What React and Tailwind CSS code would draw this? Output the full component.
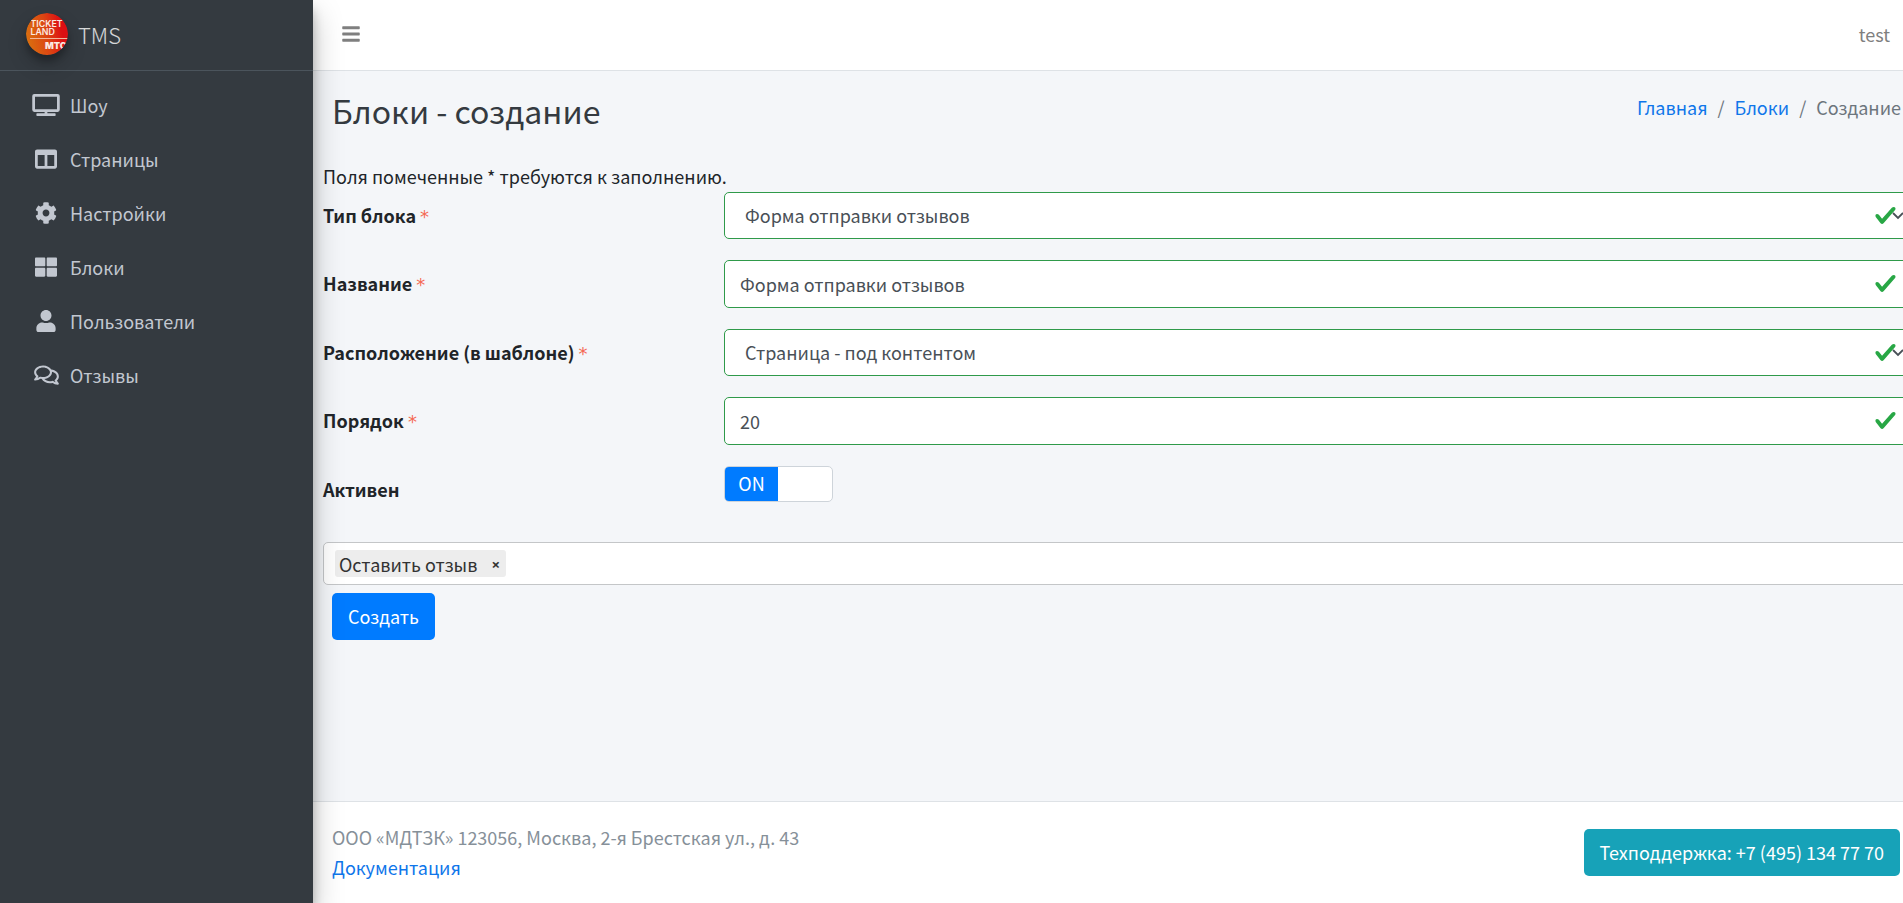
import { useState } from "react";
import { FaBars, FaCog, FaColumns, FaRegComments, FaThLarge, FaTv, FaUser } from "react-icons/fa";

const navItems = [
  { label: "Шоу", Icon: FaTv, width: "w-7" },
  { label: "Страницы", Icon: FaColumns, width: "w-[22px]" },
  { label: "Настройки", Icon: FaCog, width: "w-[22px]" },
  { label: "Блоки", Icon: FaThLarge, width: "w-[22px]" },
  { label: "Пользователи", Icon: FaUser, width: "w-5" },
  { label: "Отзывы", Icon: FaRegComments, width: "w-[25px]" },
];

function Logo() {
  return (
    <svg
      viewBox="0 0 42 42"
      className="size-[42px] rounded-full shadow-[0_10px_20px_rgba(0,0,0,0.19),0_6px_6px_rgba(0,0,0,0.23)]"
      aria-hidden="true"
    >
      <defs>
        <linearGradient id="logo-fill" x1="0" y1="0.6" x2="1" y2="0.4">
          <stop offset="0" stopColor="#d9700f" />
          <stop offset="0.5" stopColor="#dc4412" />
          <stop offset="0.85" stopColor="#dd0f12" />
        </linearGradient>
        <clipPath id="logo-clip">
          <circle cx="21" cy="21" r="21" />
        </clipPath>
      </defs>
      <g clipPath="url(#logo-clip)">
        <rect width="42" height="42" fill="url(#logo-fill)" />
        <g fill="#fbe9e0" fontFamily="Inter, sans-serif" fontWeight="600">
          <text x="4.5" y="13.5" fontSize="8.8">TICKET</text>
          <text x="4.5" y="21.5" fontSize="8.8">LAND</text>
          <text x="19" y="35.5" fontSize="9.2" fontWeight="900">МТС</text>
        </g>
        <rect x="4" y="25" width="38" height="1" fill="#f3b79b" />
      </g>
    </svg>
  );
}

function Sidebar() {
  return (
    <aside className="relative z-10 w-[313px] shrink-0 bg-[#343a40] shadow-[0_14px_28px_rgba(0,0,0,0.25),0_10px_10px_rgba(0,0,0,0.22)]">
      <a href="#" className="flex h-[71px] items-center gap-[10px] border-b border-[#4b545c] pb-[3px] pl-[26px] text-[22px] font-light leading-8 text-white/80">
        <Logo />
        <span>TMS</span>
      </a>
      <nav className="px-[10px] pt-[9px]">
        <ul className="flex flex-col gap-1">
          {navItems.map(({ label, Icon, width }) => (
            <li key={label}>
              <a href="#" className="flex h-[50px] items-center gap-2 px-5 text-[#c2c7d0]">
                <span className="flex w-8 justify-center">
                  <Icon className={`h-[22px] shrink-0 ${width}`} />
                </span>
                <span>{label}</span>
              </a>
            </li>
          ))}
        </ul>
      </nav>
    </aside>
  );
}

function ValidMark() {
  return (
    <svg viewBox="0 0 8 8" className="pointer-events-none absolute right-[13px] top-3 size-[23px]" aria-hidden="true">
      <path
        fill="#28a745"
        d="M2.3 6.73L.6 4.53c-.4-1.04.46-1.4 1.1-.8l1.1 1.4 3.4-3.8c.6-.63 1.6-.27 1.2.7l-4 4.6c-.43.5-.8.4-1.1.1z"
      />
    </svg>
  );
}

function Row({ id, label, required, children }) {
  return (
    <div className="mb-[21px] grid grid-cols-[401px_minmax(0,1fr)]">
      <label htmlFor={id} className="pt-2 font-bold">
        {label}
        {required && (
          <span className="ml-1 font-['DejaVu_Sans',sans-serif] font-normal leading-none text-[#f56954]">*</span>
        )}
      </label>
      <div className="relative">{children}</div>
    </div>
  );
}

const control = "w-full rounded-[5px] border border-[#2f9a4a] bg-white pr-12 text-[#495057] outline-none";

function SelectField({ id, label, options }) {
  return (
    <Row id={id} label={label} required>
      <select id={id} className={`${control} block h-[47px] appearance-none pb-[2px] pl-5`}>
        {options.map((o) => (
          <option key={o}>{o}</option>
        ))}
      </select>
      <ValidMark />
      <svg viewBox="0 0 12 8" className="pointer-events-none absolute right-[6px] top-5 h-2 w-3" aria-hidden="true">
        <path d="M1 1l5 5 5-5" fill="none" stroke="#495057" strokeWidth="1.8" />
      </svg>
    </Row>
  );
}

function InputField({ id, label, value }) {
  return (
    <Row id={id} label={label} required>
      <input id={id} type="text" defaultValue={value} className={`${control} block h-12 pl-[15px]`} />
      <ValidMark />
    </Row>
  );
}

function Toggle({ id }) {
  const [on, setOn] = useState(true);
  return (
    <button
      id={id}
      type="button"
      role="switch"
      aria-checked={on}
      onClick={() => setOn(!on)}
      className={`flex h-9 w-[109px] overflow-hidden rounded-[5px] border border-[#ced4da] bg-white ${on ? "" : "justify-end"}`}
    >
      <span className={`flex h-full w-[53px] items-center justify-center pb-[2px] ${on ? "bg-[#007bff] text-white" : "bg-[#e9ecef]"}`}>
        {on ? "ON" : "OFF"}
      </span>
    </button>
  );
}

export default function App() {
  return (
    <div className="flex min-h-screen overflow-hidden bg-[#f4f6f9] font-['Noto_Sans_CJK_JP','Noto_Sans',sans-serif] text-[18px] leading-[30px] text-[#212529]">
      <Sidebar />
      <div className="flex min-w-0 flex-1 flex-col">
        <header className="flex h-[71px] items-center justify-between border-b border-[#dee2e6] bg-white pb-[2px] pl-7 pr-[13px] text-[#7f7f7f]">
          <button type="button" aria-label="Меню">
            <FaBars className="size-5" />
          </button>
          <a href="#">test</a>
        </header>

        <main className="flex-1">
          <div className="flex items-start justify-between pb-[29px] pl-[19px] pr-[2px] pt-[17px]">
            <h1 className="text-[32px] leading-[44px] text-[#343a40]">Блоки - создание</h1>
            <nav className="pt-1" aria-label="Навигация">
              <ol className="flex gap-[10px] text-[#6c757d]">
                <li><a href="#" className="text-[#0f76ea]">Главная</a></li>
                <li aria-hidden="true">/</li>
                <li><a href="#" className="text-[#0f76ea]">Блоки</a></li>
                <li aria-hidden="true">/</li>
                <li>Создание</li>
              </ol>
            </nav>
          </div>

          <form className="-mr-[7px] pl-[10px]" onSubmit={(e) => e.preventDefault()}>
            <p className="pb-px">Поля помеченные * требуются к заполнению.</p>
            <SelectField id="type" label="Тип блока" options={["Форма отправки отзывов"]} />
            <InputField id="name" label="Название" value="Форма отправки отзывов" />
            <SelectField id="place" label="Расположение (в шаблоне)" options={["Страница - под контентом"]} />
            <InputField id="order" label="Порядок" value="20" />
            <Row id="active" label="Активен">
              <Toggle id="active" />
            </Row>

            <div className="mt-[38px] flex h-[43px] items-center rounded-[5px] border border-[#c4c6c8] bg-white px-[11px]">
              <span className="flex h-[27px] items-center rounded-[3px] bg-[#ededed] pl-1 pr-[6px] text-[#333]">
                Оставить отзыв
                <button
                  type="button"
                  aria-label="Удалить"
                  className="ml-[14px] w-[9px] font-['Noto_Sans',sans-serif] text-[15px] font-bold leading-5"
                >
                  ×
                </button>
              </span>
            </div>
            <button type="submit" className="ml-[9px] mt-2 h-[47px] rounded-[5px] bg-[#007bff] px-4 pb-px text-white">
              Создать
            </button>
          </form>
        </main>

        <footer className="flex h-[102px] items-center justify-between border-t border-[#dee2e6] bg-white pl-[19px] pr-[3px] text-[#869099]">
          <div className="pb-[2px]">
            <p>ООО «МДТЗК» 123056, Москва, 2-я Брестская ул., д. 43</p>
            <a href="#" className="text-[#0f76ea]">Документация</a>
          </div>
          <a href="tel:+74951347770" className="flex h-[47px] items-center rounded-[5px] bg-[#17a2b8] px-4 pb-[2px] text-white">
            Техподдержка: +7 (495) 134 77 70
          </a>
        </footer>
      </div>
    </div>
  );
}
